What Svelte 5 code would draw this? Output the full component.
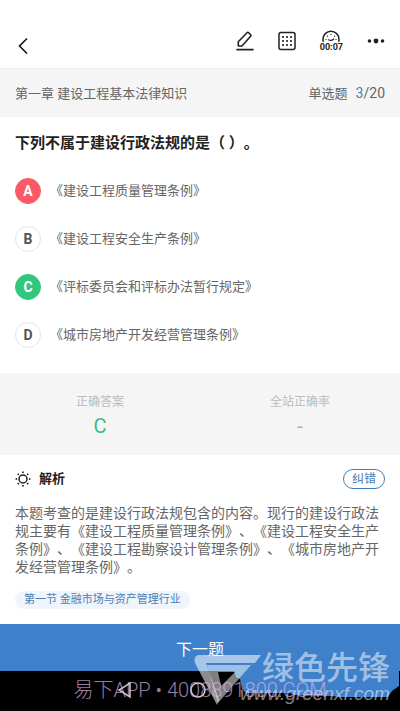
<script>
  const options = [
    { key: 'A', text: '《建设工程质量管理条例》', state: 'wrong' },
    { key: 'B', text: '《建设工程安全生产条例》', state: '' },
    { key: 'C', text: '《评标委员会和评标办法暂行规定》', state: 'right' },
    { key: 'D', text: '《城市房地产开发经营管理条例》', state: '' }
  ];
  const rays = [0, 45, 90, 135, 180, 225, 270, 315];
</script>

<div class="screen">
  <header>
    <button class="icon" aria-label="返回">
      <svg width="12" height="18" viewBox="0 0 12 18"><path d="M9 1.500 1.500 9 9 16.500" fill="none" stroke="#111" stroke-width="1.6" /></svg>
    </button>
    <div class="tools">
      <button class="icon" aria-label="笔记">
        <svg width="18" height="20" viewBox="0 0 18 20" fill="none" stroke="#222" stroke-width="1.6" stroke-linejoin="round">
          <path d="M2.300 15v-4.200L11 1.700q.8-.8 1.600 0l2 2q.8.8 0 1.600L6 15z" />
          <path d="M1 18.600h16" stroke-linecap="round" />
        </svg>
      </button>
      <button class="icon" aria-label="答题卡">
        <svg width="18" height="20" viewBox="0 0 18 20">
          <rect x="1" y="1.500" width="16" height="17" rx="2" fill="none" stroke="#222" stroke-width="1.5" />
          {#each [5, 9, 13] as x}{#each [6, 10, 14] as y}<rect x={x - 0.9} y={y - 0.9} width="1.8" height="1.8" fill="#222" />{/each}{/each}
        </svg>
      </button>
      <button class="icon timer" aria-label="计时">
        <svg width="20" height="12" viewBox="0 0 20 12" fill="none" stroke="#222" stroke-width="1.5" stroke-linecap="round">
          <path d="M2.200 11.200A8 8 0 0 1 2 9.300a8 8 0 0 1 16 0A8 8 0 0 1 17.800 11.200" />
          <path d="M7.500 9.800q2.800 1.700 5.200-.8" stroke-width="1.2" />
          <path d="M5 9.500h.1M6.300 6.200h.1M10 4.500h.1M13.600 6.200h.1M15 9.500h.1" stroke-width="1.2" />
        </svg>
        <span>00:07</span>
      </button>
      <button class="icon" aria-label="更多">
        <svg width="18" height="6" viewBox="0 0 18 6" fill="#222"><circle cx="2.500" cy="3" r="1.800" /><circle cx="9" cy="3" r="2.400" /><circle cx="15.500" cy="3" r="1.800" /></svg>
      </button>
    </div>
  </header>

  <div class="chapter">
    <span>第一章 建设工程基本法律知识</span>
    <span class="progress"><span>单选题</span><span class="count"><b>3</b>/20</span></span>
  </div>

  <main>
    <section class="question">
      <h1>下列不属于建设行政法规的是（ ）。</h1>
      <div class="options">
        {#each options as o}
          <button class="option"><span class="key {o.state}">{o.key}</span><span>{o.text}</span></button>
        {/each}
      </div>
    </section>

    <dl class="result">
      <div><dt>正确答案</dt><dd class="green">C</dd></div>
      <div><dt>全站正确率</dt><dd class="gold">-</dd></div>
    </dl>

    <section class="analysis">
      <div class="head">
        <svg width="16" height="16" viewBox="0 0 16 16" fill="none" stroke="#222">
          <circle cx="8" cy="8" r="4" stroke-width="1.5" />
          {#each rays as r}<path d="M8 .6v1.500" stroke-width="1.7" transform="rotate({r} 8 8)" />{/each}
        </svg>
        <h2>解析</h2>
        <button class="fix">纠错</button>
      </div>
      <p>本题考查的是建设行政法规包含的内容。现行的建设行政法规主要有《建设工程质量管理条例》、《建设工程安全生产条例》、《建设工程勘察设计管理条例》、《城市房地产开发经营管理条例》。</p>
      <a class="tag" href="#section">第一节 金融市场与资产管理行业</a>
    </section>
  </main>

  <footer>
    <button class="next">下一题</button>
    <div class="nav">
      <svg class="patch" width="166" height="28" viewBox="0 0 166 28"><path d="M0 0H165V15L158 20 154 26H106L98 25 60 24 56 22H12L8 18 6 8 2 6z" fill="#3f80ca" /></svg>
      <svg class="keys" width="100" height="18" viewBox="0 0 100 18" fill="none" stroke="#ccc" stroke-width="1.5"><path d="M14 2v14L3 9z" /><circle cx="82" cy="9" r="7" /></svg>
    </div>
    <div class="mark">
      <svg width="68" height="50" viewBox="0 0 68 50" fill="#fff">
        <path d="M5 0H67L61 8H12L25 45 23 50 1 8Q-1 1 5 0z" opacity=".55" />
        <path fill-rule="evenodd" d="M13 10H57L24 48zM24 17 27 31 41 17z" opacity=".5" />
      </svg>
      <div class="words"><strong>绿色先锋</strong><em>www.greenxf.com</em></div>
    </div>
    <span class="promo">易下APP • 4008891800.COM</span>
  </footer>
</div>

<style>
  :global(body) { margin: 0; background: #fff; }
  .screen { font-family: Roboto, "Noto Sans CJK SC", sans-serif; color: #666; min-height: 100vh; display: flex; flex-direction: column; text-spacing-trim: space-all; }
  button { font: inherit; color: inherit; background: none; border: 0; padding: 0; margin: 0; cursor: pointer; }
  svg { display: block; }
  h1, h2, p, dl, dd { margin: 0; }
  header { height: 44px; padding: 24px 15px 0 18px; display: flex; align-items: center; justify-content: space-between; border-bottom: 1px solid #eee; }
  .icon { display: flex; flex-direction: column; align-items: center; }
  .tools { display: flex; align-items: center; gap: 24px; padding-bottom: 10px; }
  .timer { font-size: 9px; line-height: 10px; font-weight: 700; color: #222; }
  .chapter { box-sizing: border-box; background: #f5f5f5; height: 48px; padding: 0 15px 2px; display: flex; align-items: center; justify-content: space-between; font-size: 13px; }
  .progress { display: flex; align-items: baseline; gap: 8px; }
  .count { font-size: 14px; }
  .progress b { color: #3f80b8; font-weight: 400; }
  main { flex: 1; }
  .question { padding: 16px 15px 25px; }
  h1 { font-size: 15px; line-height: 20px; font-weight: 700; color: #222; }
  .options { display: flex; flex-direction: column; gap: 22px; padding-top: 25px; }
  .option { display: flex; align-items: center; gap: 9px; font-size: 13px; line-height: 18px; text-align: left; }
  .key { box-sizing: border-box; width: 26px; height: 26px; border-radius: 50%; border: 1px solid #e6e6e6; display: grid; place-items: center; font-weight: 700; font-size: 14px; color: #555; }
  .wrong { background: #f95a66; border-color: #f95a66; color: #fff; }
  .right { background: #33c77d; border-color: #33c77d; color: #fff; }
  .result { box-sizing: border-box; background: #f5f5f5; display: flex; height: 82px; padding-top: 5px; align-items: center; text-align: center; }
  .result div { flex: 1; }
  dt { font-size: 12px; line-height: 18px; color: #bbb; }
  dd { font-size: 20px; line-height: 30px; }
  .green { color: #3dba83; }
  .gold { color: #d3a960; }
  .analysis { padding: 14px 15px; }
  .head { display: flex; align-items: center; }
  h2 { font-size: 13px; line-height: 20px; color: #222; margin-left: 8px; flex: 1; }
  .fix { box-sizing: border-box; width: 42px; height: 20px; border: 1px solid #3f80b8; border-radius: 10px; color: #3f80b8; font-size: 12px; line-height: 18px; }
  p { font-size: 14px; line-height: 18px; padding: 15px 0 12px; }
  .tag { display: inline-block; background: #eef5fc; color: #4a80b5; border-radius: 9px; font-size: 11px; line-height: 18px; padding: 0 9px; text-decoration: none; }
  footer { position: relative; }
  .next { display: block; width: 100%; height: 47px; background: #3f80ca; color: #fff; font-size: 16px; }
  .nav { position: relative; height: 40px; background: #000; }
  .patch { position: absolute; right: 0; top: 0; }
  .keys { position: absolute; left: 29%; top: 10px; }
  .promo { position: absolute; left: 0; right: 0; bottom: 6px; text-align: center; color: #dcb4e4; opacity: .7; font-size: 20px; line-height: 30px; white-space: nowrap; font-weight: 300; pointer-events: none; }
  .mark { position: absolute; right: 10px; bottom: 4px; display: flex; pointer-events: none; color: #fff; }
  .words { display: flex; flex-direction: column; opacity: .5; }
  .words strong { font-size: 32px; line-height: 26px; font-weight: 500; }
  .words em { font-family: "Liberation Sans", sans-serif; font-size: 19px; line-height: 26px; margin-left: -22px; }
</style>
